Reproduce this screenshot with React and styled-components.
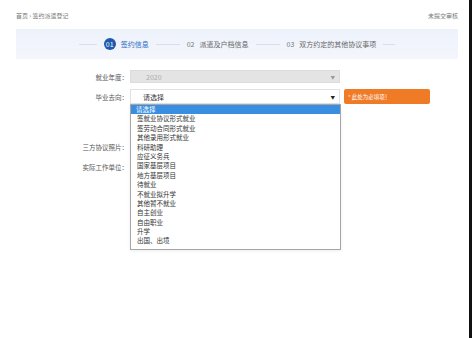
import React from "react";
import styled, { createGlobalStyle } from "styled-components";

const Global = createGlobalStyle`
  html, body {
    margin: 0;
    padding: 0;
    background: #ffffff;
  }
  body {
    font-family: "Noto Sans CJK SC", "Noto Sans", sans-serif;
  }
`;

const Frame = styled.div`
  display: flex;
  width: 472px;
  height: 338px;
  overflow: hidden;
`;

const Page = styled.div`
  flex: 1;
  background: #ffffff;
  padding: 0 11px 0 16px;
  display: flex;
  flex-direction: column;
`;

const Edge = styled.div`
  width: 3px;
  background: #111111;
`;

const TopBar = styled.div`
  height: 28px;
  display: flex;
  align-items: center;
  justify-content: space-between;
  font-size: 6px;
  color: #777;
  padding-top: 1px;
`;

const Steps = styled.div`
  height: 30px;
  display: flex;
  align-items: center;
  justify-content: center;
  gap: 7px;
  background: linear-gradient(180deg, #eef2fb 0%, #f3f6fc 100%);
  font-size: 7px;
  color: #666;
`;

const Line = styled.div`
  width: ${(p) => p.w}px;
  height: 1px;
  background: #d9dee8;
`;

const StepNo = styled.span`
  display: inline-flex;
  align-items: center;
  justify-content: center;
  width: ${(p) => (p.active ? "12px" : "auto")};
  height: 12px;
  border-radius: 50%;
  background: ${(p) => (p.active ? "#1d5aad" : "transparent")};
  color: ${(p) => (p.active ? "#fff" : "#777")};
  font-size: 7px;
  margin-right: ${(p) => (p.active ? "-2px" : "5px")};
`;

const StepLabel = styled.span`
  color: ${(p) => (p.active ? "#2b6cc4" : "#666")};
`;

const Form = styled.div`
  position: relative;
  padding-top: 11px;
  display: flex;
  flex-direction: column;
`;

const Row = styled.div`
  display: flex;
  align-items: center;
  height: ${(p) => (p.tall ? "15px" : "13px")};
  margin-bottom: ${(p) => p.mb || 0}px;
`;

const Label = styled.div`
  width: 112px;
  text-align: right;
  font-size: 6.5px;
  color: #555;
  padding-right: 2px;
`;

const Select = styled.div`
  position: relative;
  width: 210px;
  height: ${(p) => (p.tall ? "15px" : "13px")};
  box-sizing: border-box;
  border: 1px solid ${(p) => (p.disabled ? "#dcdcdc" : "#e2e2e2")};
  background: ${(p) => (p.disabled ? "#e4e4e4" : "#ffffff")};
  color: ${(p) => (p.disabled ? "#aaa" : "#333")};
  font-size: 7px;
  display: flex;
  align-items: center;
  justify-content: space-between;
  padding: 0 4px 0 ${(p) => (p.disabled ? "15px" : "12px")};
`;

const Arrow = styled.span`
  font-size: 4.5px;
  color: ${(p) => (p.disabled ? "#999" : "#222")};
`;

const Hint = styled.div`
  margin-left: 4px;
  width: 86px;
  height: 15px;
  border-radius: 2px;
  background: #f07b27;
  color: #fff;
  font-size: 5.5px;
  display: flex;
  align-items: center;
  padding-left: 4px;
  box-sizing: border-box;
`;

const Dropdown = styled.ul`
  position: absolute;
  left: 0;
  top: 15px;
  width: 211px;
  margin: 0;
  padding: 0 0 3px;
  list-style: none;
  background: #fff;
  border: 1px solid #a6a6a6;
  box-sizing: border-box;
  box-shadow: 0 1px 3px rgba(0, 0, 0, 0.08);
  z-index: 3;
`;

const Option = styled.li`
  height: 9.4px;
  line-height: 9.4px;
  font-size: 6.5px;
  padding-left: ${(p) => (p.selected ? "5px" : "6px")};
  color: ${(p) => (p.selected ? "#fff" : "#333")};
  background: ${(p) => (p.selected ? "#3a8ee2" : "transparent")};
`;

const FieldWrap = styled.div`
  position: relative;
  display: flex;
  align-items: center;
`;

const options = [
  "请选择",
  "签就业协议形式就业",
  "签劳动合同形式就业",
  "其他录用形式就业",
  "科研助理",
  "应征义务兵",
  "国家基层项目",
  "地方基层项目",
  "待就业",
  "不就业拟升学",
  "其他暂不就业",
  "自主创业",
  "自由职业",
  "升学",
  "出国、出境",
];

export default function App() {
  return (
    <>
      <Global />
      <Frame>
        <Page>
          <TopBar>
            <span>首页 › 签约派遣登记</span>
            <span>未提交审核</span>
          </TopBar>
          <Steps>
            <Line w={18} />
            <StepNo active>01</StepNo>
            <StepLabel active>签约信息</StepLabel>
            <Line w={24} />
            <span>
              <StepNo>02</StepNo>
              <StepLabel>派遣及户档信息</StepLabel>
            </span>
            <Line w={24} />
            <span>
              <StepNo>03</StepNo>
              <StepLabel>双方约定的其他协议事项</StepLabel>
            </span>
            <Line w={12} />
          </Steps>
          <Form>
            <Row mb={6}>
              <Label>就业年度：</Label>
              <Select disabled>
                <span>2020</span>
                <Arrow disabled>▼</Arrow>
              </Select>
            </Row>
            <Row tall mb={36}>
              <Label>毕业去向：</Label>
              <FieldWrap>
                <Select tall>
                  <span>请选择</span>
                  <Arrow>▼</Arrow>
                </Select>
                <Dropdown>
                  {options.map((o, i) => (
                    <Option key={o} selected={i === 0}>
                      {o}
                    </Option>
                  ))}
                </Dropdown>
                <Hint>* 此处为必填项！</Hint>
              </FieldWrap>
            </Row>
            <Row mb={7}>
              <Label>三方协议照片：</Label>
            </Row>
            <Row>
              <Label>实际工作单位：</Label>
            </Row>
          </Form>
        </Page>
        <Edge />
      </Frame>
    </>
  );
}
